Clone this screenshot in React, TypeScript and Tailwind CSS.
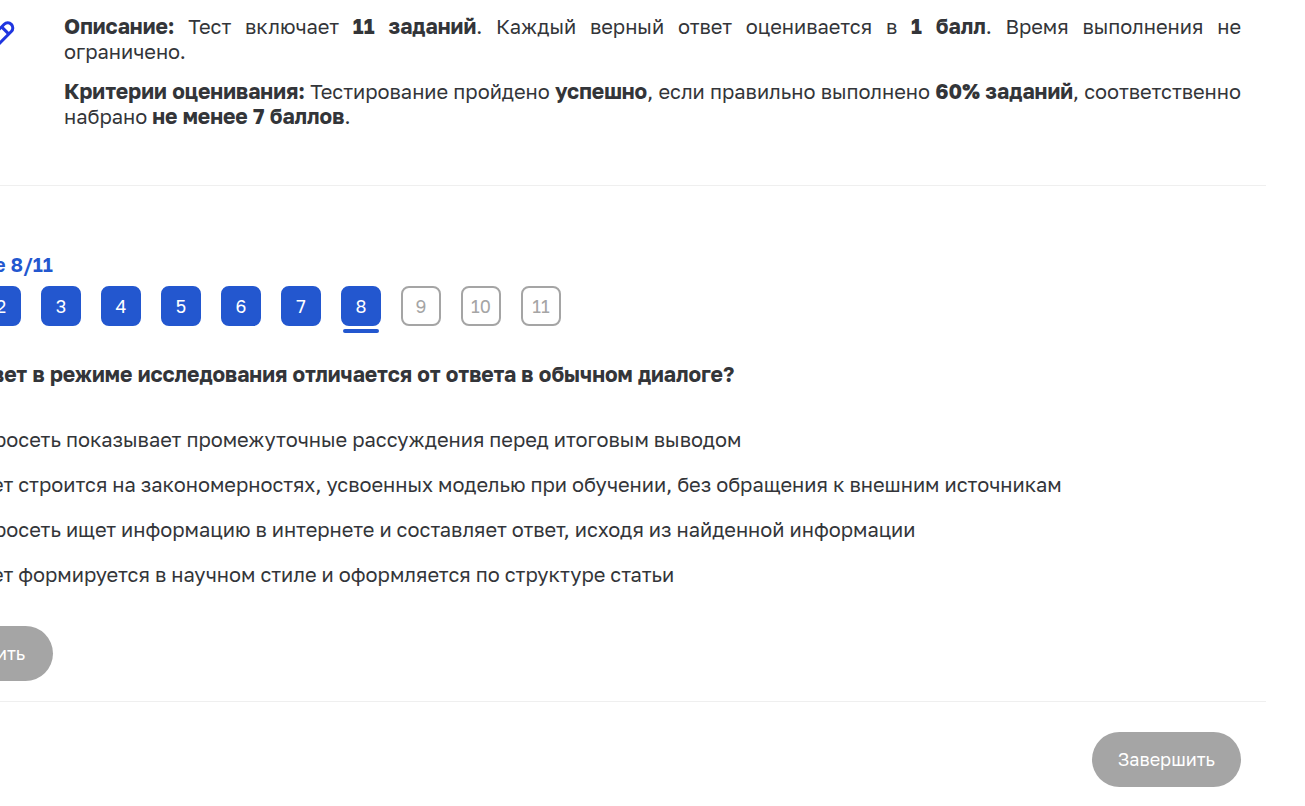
import React, { useState } from 'react';

const questions = [2, 3, 4, 5, 6, 7, 8, 9, 10, 11];
const current = 8;

const answers = [
  { text: 'росеть показывает промежуточные рассуждения перед итоговым выводом', className: '-ml-1.5' },
  { text: 'ет строится на закономерностях, усвоенных моделью при обучении, без обращения к внешним источникам', className: '-ml-2' },
  { text: 'росеть ищет информацию в интернете и составляет ответ, исходя из найденной информации', className: '-ml-1.5' },
  { text: 'ет формируется в научном стиле и оформляется по структуре статьи', className: '-ml-2' },
];

const PencilIcon: React.FC = () => (
  <svg width="16" height="30" viewBox="0 0 16 30" fill="none" stroke="#1f35e0" strokeWidth="3" strokeLinejoin="round" aria-hidden="true">
    <path d="M-8 16.5 L4.2 4.3 A4.8 4.8 0 0 1 11.3 11.5 L-4 26.8" />
    <path d="M1.6 6.9 L8.6 13.9" />
  </svg>
);

const Strong: React.FC<{ children: React.ReactNode }> = ({ children }) => (
  <strong className="text-[21px] leading-none font-bold">{children}</strong>
);

const App: React.FC = () => {
  const [selected, setSelected] = useState<number | null>(null);

  return (
    <main className="overflow-hidden bg-white font-['Golos_Text',Inter,sans-serif] text-[20px] leading-[25px] text-[#333539]">
      <div className="mr-[39px]">

        {/* Description */}
        <section className="flex border-b border-[#efefef] pt-3.5 pb-14 pr-[25px]">
          <div className="w-16 shrink-0 pt-1.5">
            <PencilIcon />
          </div>
          <div className="flex-1 space-y-[15px] text-justify">
            <p>
              <Strong>Описание:</Strong> Тест включает <Strong>11 заданий</Strong>. Каждый верный ответ оценивается в <Strong>1 балл</Strong>. Время выполнения не ограничено.
            </p>
            <p>
              <Strong>Критерии оценивания:</Strong> Тестирование пройдено <Strong>успешно</Strong>, если правильно выполнено <Strong>60% заданий</Strong>, соответственно набрано <Strong>не менее 7 баллов</Strong>.
            </p>
          </div>
        </section>

        {/* Question */}
        <section className="border-b border-[#efefef] pt-[66px] pb-5">
          <h2 className="-ml-1.5 font-semibold text-[#2357cf]">е 8/11</h2>

          <nav className="-ml-[19px] mt-[9px] flex gap-5 text-[18px]">
            {questions.map((n) => (
              <button
                key={n}
                className={`relative size-10 shrink-0 rounded-lg border-2 ${
                  n <= current ? 'border-[#2357cf] bg-[#2357cf] text-white' : 'border-[#a5a5a5] bg-white text-[#a5a5a5]'
                }`}
              >
                {n}
                {n === current && <span className="absolute inset-x-0 top-[41px] h-1 rounded-sm bg-[#2357cf]" />}
              </button>
            ))}
          </nav>

          <fieldset className="mt-9">
            <legend className="-ml-2 text-[21px] leading-[25px] font-bold">вет в режиме исследования отличается от ответа в обычном диалоге?</legend>
            <div className="mt-10 space-y-5">
              {answers.map((answer, i) => (
                <label key={i} className={`block cursor-pointer ${answer.className}`}>
                  <input
                    type="radio"
                    name="answer"
                    className="sr-only"
                    checked={selected === i}
                    onChange={() => setSelected(i)}
                  />
                  {answer.text}
                </label>
              ))}
            </div>
          </fieldset>

          <button className="-ml-1 mt-[39px] block h-[55px] rounded-r-full bg-[#a5a5a5] pr-7 text-[18px] text-white">ить</button>
        </section>

        <div className="flex justify-end pt-[30px] pr-[25px] pb-5">
          <button className="h-[55px] rounded-full bg-[#a5a5a5] px-[26px] text-[18px] text-white">Завершить</button>
        </div>
      </div>
    </main>
  );
};

export default App;
